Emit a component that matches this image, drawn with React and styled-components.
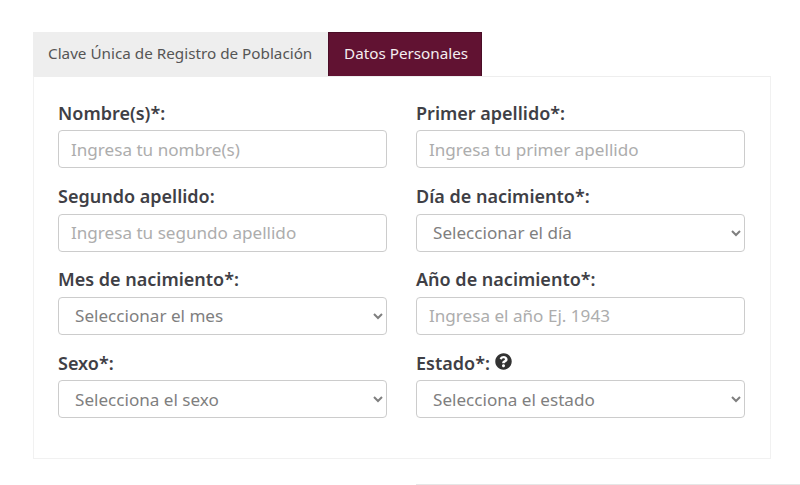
import React from "react";
import styled, { createGlobalStyle } from "styled-components";
import { FaQuestionCircle } from "react-icons/fa";

const GlobalStyle = createGlobalStyle`
    html, body {
        margin: 0;
        padding: 0;
        background: #fff;
        overflow: hidden;
    }
    body {
        font-family: "Noto Sans", "Open Sans", sans-serif;
        color: #3f3f3f;
    }
`;

const fields = [
    { label: "Nombre(s)*:", placeholder: "Ingresa tu nombre(s)" },
    { label: "Primer apellido*:", placeholder: "Ingresa tu primer apellido" },
    { label: "Segundo apellido:", placeholder: "Ingresa tu segundo apellido" },
    { label: "Día de nacimiento*:", option: "Seleccionar el día" },
    { label: "Mes de nacimiento*:", option: "Seleccionar el mes" },
    { label: "Año de nacimiento*:", placeholder: "Ingresa el año Ej. 1943" },
    { label: "Sexo*:", option: "Selecciona el sexo" },
    { label: "Estado*:", option: "Selecciona el estado", help: true },
];

export default function App() {
    return (
        <>
            <GlobalStyle />
            <Page>
                <Tabs>
                    <Tab $width={295}>Clave Única de Registro de Población</Tab>
                    <Tab $width={154} $active>Datos Personales</Tab>
                </Tabs>
                <Panel>
                    <FormGrid>
                        {fields.map((field) => (
                            <Field key={field.label}>
                                <Label>
                                    {field.label}
                                    {field.help && <FaQuestionCircle size={17} />}
                                </Label>
                                {field.option ? (
                                    <Select defaultValue={field.option}>
                                        <option>{field.option}</option>
                                    </Select>
                                ) : (
                                    <Input placeholder={field.placeholder} />
                                )}
                            </Field>
                        ))}
                    </FormGrid>
                </Panel>
                <FooterRule />
            </Page>
        </>
    );
}

const Page = styled.div`
    width: 800px;
    height: 485px;
    padding-top: 32px;
    box-sizing: border-box;
    overflow: hidden;
`;
const Tabs = styled.div`
    display: flex;
    margin-left: 33px;
    height: 44px;
`;
const Tab = styled.div`
    display: flex;
    align-items: center;
    box-sizing: border-box;
    width: ${(props) => props.$width}px;
    padding: 0 0 3px 15px;
    white-space: nowrap;
    font-size: 15.25px;
    color: ${(props) => (props.$active ? "#f4eef0" : "#555555")};
    background: ${(props) => (props.$active ? "#611232" : "#eeeeee")};
    border: ${(props) => (props.$active ? "1px solid #4a0d26" : "none")};
    border-bottom: none;
`;
const Panel = styled.div`
    box-sizing: border-box;
    width: 738px;
    height: 383px;
    margin-left: 33px;
    padding: 24.2px 24px 0 24px;
    border: 1px solid #f1f1f1;
    border-top: 1px solid #eeeeee;
`;
const FormGrid = styled.div`
    display: grid;
    grid-template-columns: 329px 329px;
    column-gap: 29px;
    row-gap: 16.4px;
`;
const Field = styled.div`
    display: flex;
    flex-direction: column;
`;
const Label = styled.label`
    display: flex;
    align-items: center;
    gap: 5px;
    height: 29px;
    padding-bottom: 6px;
    box-sizing: border-box;
    font-size: 18px;
    font-weight: 600;
    color: #3f3f46;
    svg {
        color: #333333;
        margin-top: -3px;
    }
`;
const Input = styled.input`
    box-sizing: border-box;
    width: 329px;
    height: 38px;
    padding: 0 12px;
    font-family: inherit;
    font-size: 17.1px;
    color: #555555;
    background: #fff;
    border: 1px solid #cccccc;
    border-radius: 4px;
    outline: none;
    &::placeholder {
        color: #adadad;
        opacity: 1;
    }
`;
const Select = styled.select`
    box-sizing: border-box;
    width: 329px;
    height: 38px;
    padding: 0 12px;
    font-family: inherit;
    font-size: 17.1px;
    color: #7f7f7f;
    background: #fff;
    border: 1px solid #cccccc;
    border-radius: 4px;
    outline: none;
`;
const FooterRule = styled.div`
    margin: 25px 0 0 416px;
    height: 1px;
    background: #e6e6e6;
`;
